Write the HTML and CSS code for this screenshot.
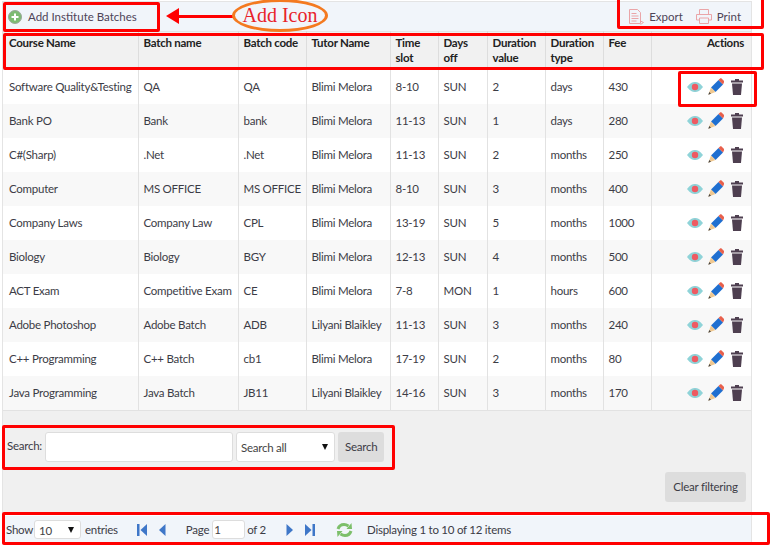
FILE: index.html
```html
<!DOCTYPE html>
<html lang="en">
<head>
    <meta charset="UTF-8">
    <title>Institute Batches</title>
    <link rel="stylesheet" href="styles.css">
</head>
<body>
    <svg width="0" height="0" class="defs">
        <symbol id="eye" viewBox="0 0 16 10">
            <path d="M0 5C3 1 5.500 0 8 0s5 1 8 5c-3 4-5.500 5-8 5S3 9 0 5z" fill="#8fd3d8"/>
            <circle cx="8" cy="5" r="3.200" fill="#ee5a62"/>
        </symbol>
        <symbol id="pencil" viewBox="0 0 16 17">
            <path d="M3 9.500 10.500 2l4.500 4.500L7.500 14z" fill="#1f6fd0"/>
            <path d="M10.500 2l1.300-1.300c.6-.6 1.400-.6 2 0l2 2c.6.600.6 1.400 0 2L15 6.500z" fill="#e8604c"/>
            <path d="M3 9.500.3 16.700 7.500 14z" fill="#f0c890"/>
            <path d="M1.300 14 .3 16.700 3 15.700z" fill="#444"/>
        </symbol>
        <symbol id="trash" viewBox="0 0 12 16">
            <path d="M4 0h4v1.500h4v2H0v-2h4z" fill="#4e3f50"/>
            <path d="M1 4.500h10L10 16H2z" fill="#4e3f50"/>
        </symbol>
        <symbol id="first" viewBox="0 0 11 12">
            <rect x="0" y="0" width="2.500" height="12" fill="#3f77c8"/>
            <path d="M10 0v12L3.500 6z" fill="#3f77c8"/>
        </symbol>
        <symbol id="prev" viewBox="0 0 7 12">
            <path d="M6.500 0v12L0 6z" fill="#3f77c8"/>
        </symbol>
    </svg>

    <div class="panel">
        <div class="toolbar">
            <a class="tool add">
                <svg width="14" height="14" viewBox="0 0 14 14">
                    <circle cx="7" cy="7" r="6.500" fill="#7dbb72" stroke="#9aa89a"/>
                    <path d="M3.500 7h7M7 3.500v7" stroke="#fff" stroke-width="2"/>
                </svg>
                Add Institute Batches
            </a>
            <div class="tools-right">
                <a class="tool">
                    <svg width="16" height="16" viewBox="0 0 16 16" fill="none" stroke="#eaa5a8">
                        <path d="M1.500.5h8l3 3v11h-11zM3.500 4.500h5M3.500 7h7M3.500 9.500h7M3.500 12h5M12.500 12l3 1.500-3 2"/>
                    </svg>
                    Export
                </a>
                <a class="tool">
                    <svg width="16" height="15" viewBox="0 0 16 15" fill="none" stroke="#eaa5a8">
                        <path d="M3.500 5V.5h9V5M3.500 11H.5V5.500h15V11h-3M3.500 9h9v5.500h-9z"/>
                    </svg>
                    Print
                </a>
            </div>
        </div>

        <table class="grid">
            <colgroup>
                <col class="c-course"><col class="c-name"><col class="c-code"><col class="c-tutor"><col class="c-time">
                <col class="c-off"><col class="c-val"><col class="c-type"><col class="c-fee"><col>
            </colgroup>
            <thead>
                <tr>
                    <th>Course Name</th><th>Batch name</th><th>Batch code</th><th>Tutor Name</th><th>Time slot</th>
                    <th>Days off</th><th>Duration value</th><th>Duration type</th><th>Fee</th><th class="right">Actions</th>
                </tr>
            </thead>
            <tbody id="rows"></tbody>
        </table>

        <div class="filters">
            <form class="search">
                <label>Search:</label>
                <input type="text" class="search-box">
                <span class="fake-select wide">Search all<i></i></span>
                <button type="button" class="btn">Search</button>
            </form>
            <div class="clear-row"><button type="button" class="btn">Clear filtering</button></div>
        </div>

        <div class="pager">
            <span>Show</span>
            <span class="fake-select small">10<i></i></span>
            <span>entries</span>
            <svg class="p-first" width="11" height="12"><use href="#first"/></svg>
            <svg class="p-prev" width="7" height="12"><use href="#prev"/></svg>
            <span class="p-page">Page</span>
            <input type="text" class="page-box" value="1">
            <span>of 2</span>
            <svg class="p-next flip" width="7" height="12"><use href="#prev"/></svg>
            <svg class="p-last flip" width="11" height="12"><use href="#first"/></svg>
            <svg class="p-refresh" width="17" height="16" viewBox="0 0 17 16" fill="none" stroke="#7cbf6a" stroke-width="3">
                <path d="M2 7c1-3 3-4.500 6-4.500 2 0 3 .5 4.500 1.500"/>
                <path d="M15 9c-1 3-3 4.500-6 4.500-2 0-3-.5-4.500-1.500"/>
                <path d="M10.500 7 16 7 15.500 1z" fill="#7cbf6a" stroke="none"/>
                <path d="M6.500 9 1 9l.5 6z" fill="#7cbf6a" stroke="none"/>
            </svg>
            <span class="p-info">Displaying 1 to 10 of 12 items</span>
        </div>
    </div>

    <!-- red markup drawn over the screenshot -->
    <div class="mark m-add"></div>
    <div class="mark m-head"></div>
    <div class="mark m-export"></div>
    <div class="mark m-actions"></div>
    <div class="mark m-search"></div>
    <div class="mark m-pager"></div>
    <div class="arrow"></div>
    <div class="callout">Add Icon</div>

    <script>
        var data = [
            ["Software Quality&Testing", "QA", "QA", "Blimi Melora", "8-10", "SUN", "2", "days", "430"],
            ["Bank PO", "Bank", "bank", "Blimi Melora", "11-13", "SUN", "1", "days", "280"],
            ["C#(Sharp)", ".Net", ".Net", "Blimi Melora", "11-13", "SUN", "2", "months", "250"],
            ["Computer", "MS OFFICE", "MS OFFICE", "Blimi Melora", "8-10", "SUN", "3", "months", "400"],
            ["Company Laws", "Company Law", "CPL", "Blimi Melora", "13-19", "SUN", "5", "months", "1000"],
            ["Biology", "Biology", "BGY", "Blimi Melora", "12-13", "SUN", "4", "months", "500"],
            ["ACT Exam", "Competitive Exam", "CE", "Blimi Melora", "7-8", "MON", "1", "hours", "600"],
            ["Adobe Photoshop", "Adobe Batch", "ADB", "Lilyani Blaikley", "11-13", "SUN", "3", "months", "240"],
            ["C++ Programming", "C++ Batch", "cb1", "Blimi Melora", "17-19", "SUN", "2", "months", "80"],
            ["Java Programming", "Java Batch", "JB11", "Lilyani Blaikley", "14-16", "SUN", "3", "months", "170"]
        ];
        var actions = '<td class="acts">' +
            '<svg class="a-eye" width="16" height="10"><use href="#eye"/></svg>' +
            '<svg class="a-pencil" width="16" height="17"><use href="#pencil"/></svg>' +
            '<svg class="a-trash" width="12" height="16"><use href="#trash"/></svg></td>';
        var html = "";
        data.forEach(function (row) {
            html += "<tr>";
            row.forEach(function (cell) {
                html += "<td>" + cell.replace("&", "&amp;") + "</td>";
            });
            html += actions + "</tr>";
        });
        document.getElementById("rows").innerHTML = html;
    </script>
</body>
</html>
```

FILE: styles.css
```css
body {
    margin: 0;
    background-color: #fff;
    color: #3c3c46;
    font-family: Lato, "Liberation Sans", sans-serif;
    font-size: 11.5px;
    letter-spacing: -0.25px;
    width: 784px;
    height: 548px;
    overflow: hidden;
    position: relative;
}
.defs {
    position: absolute;
}
.panel {
    width: 750px;
    margin: 1px 0 0 2px;
    border-top: 1px solid #e4e4e4;
    border-left: 1px solid #e4e4e4;
    border-right: 1px solid #e4e4e4;
    box-sizing: border-box;
}
.toolbar {
    height: 29px;
    background-color: #f1f5fa;
    display: flex;
    justify-content: space-between;
    align-items: center;
    padding: 0 10px 0 5px;
}
.tool {
    display: inline-flex;
    align-items: center;
    gap: 5px;
    color: #4e4458;
    letter-spacing: 0;
}
.tool.add {
    gap: 6px;
}
.tools-right {
    display: flex;
    gap: 13px;
}
.grid {
    width: 100%;
    border-collapse: collapse;
    table-layout: fixed;
}
.c-course { width: 135px; }
.c-name { width: 100px; }
.c-code { width: 68px; }
.c-tutor { width: 84px; }
.c-time { width: 48px; }
.c-off { width: 49px; }
.c-val { width: 58px; }
.c-type { width: 58px; }
.c-fee { width: 48px; }
.grid th {
    height: 38px;
    box-sizing: border-box;
    background-color: #f1f1f1;
    color: #222;
    font-weight: 700;
    text-align: left;
    vertical-align: top;
    padding: 3px 5px 0 5px;
    line-height: 15px;
    border-right: 1px solid #ddd;
    border-top: 1px solid #e4e4e4;
}
.grid th:first-child, .grid td:first-child {
    padding-left: 6px;
}
.grid th:last-child {
    border-right: none;
}
.grid th.right {
    text-align: right;
    padding-right: 7px;
}
.grid td {
    height: 34px;
    box-sizing: border-box;
    padding: 0 0 0 5px;
    border-right: 1px solid #e2e2e2;
    white-space: nowrap;
    overflow: hidden;
}
.grid td:last-child {
    border-right: none;
}
.grid tbody tr:nth-child(even) {
    background-color: #f8f8f8;
}
.grid td.acts {
    text-align: right;
    padding-right: 8px;
}
.acts svg {
    vertical-align: middle;
}
.a-pencil {
    margin: 0 7px 0 5px;
}
.filters {
    height: 102px;
    box-sizing: border-box;
    background-color: #f0f0f0;
    border-top: 1px solid #e2e2e2;
    padding: 21px 5px 0 4px;
}
.search {
    display: flex;
    align-items: center;
    margin: 0;
}
.search label {
    margin: -2px 3px 0 0;
}
.search-box {
    width: 188px;
    height: 30px;
    box-sizing: border-box;
    border: 1px solid #ddd;
    border-radius: 3px;
    background-color: #fff;
    margin: 0 3px 0 0;
}
.fake-select {
    position: relative;
    display: inline-block;
    box-sizing: border-box;
    background-color: #fff;
    border: 1px solid #ddd;
    border-radius: 3px;
    color: #444;
}
.fake-select i {
    position: absolute;
    top: 50%;
    right: 6px;
    margin-top: -3px;
    border-left: 3px solid transparent;
    border-right: 3px solid transparent;
    border-top: 6px solid #111;
}
.fake-select.wide {
    width: 99px;
    height: 30px;
    line-height: 30px;
    padding-left: 4px;
}
.fake-select.small {
    width: 47px;
    height: 19px;
    line-height: 19px;
    padding-left: 4px;
    margin: 0 4px 0 1px;
}
.btn {
    background-color: #ddd;
    border: none;
    border-radius: 3px;
    color: #3c3c46;
    font-family: inherit;
    font-size: inherit;
    letter-spacing: inherit;
    height: 30px;
    padding: 0 7px;
    margin-left: 3px;
}
.clear-row {
    display: flex;
    justify-content: flex-end;
    margin-top: 10px;
}
.clear-row .btn {
    width: 81px;
    padding: 0;
}
.pager {
    display: flex;
    align-items: center;
    background-color: #f1f5fa;
    height: 28px;
    margin-top: 4px;
    padding-left: 3px;
}
.pager svg {
    flex: none;
}
.flip {
    transform: scaleX(-1);
}
.p-first { margin-left: 19px; }
.p-prev { margin-left: 11px; }
.p-page { margin-left: 20px; margin-right: 3px; }
.page-box {
    width: 33px;
    height: 19px;
    box-sizing: border-box;
    border: 1px solid #ddd;
    border-radius: 3px;
    font-family: inherit;
    font-size: inherit;
    color: #444;
    padding: 0 1px;
    margin: 0 2px 0 0;
}
.p-next { margin-left: 20px; }
.p-last { margin-left: 11px; }
.p-refresh { margin-left: 21px; }
.p-info { margin-left: 14px; }

.mark {
    position: absolute;
    box-sizing: border-box;
    border: 3px solid #f00;
    border-radius: 2px;
}
.m-add { left: 3px; top: 2px; width: 157px; height: 30px; }
.m-head { left: 3px; top: 33px; width: 761px; height: 37px; }
.m-export { left: 617px; top: -3px; width: 147px; height: 32px; }
.m-actions { left: 678px; top: 71px; width: 79px; height: 36px; }
.m-search { left: 2px; top: 425px; width: 393px; height: 45px; }
.m-pager { left: 2px; top: 512px; width: 768px; height: 33px; }
.arrow {
    position: absolute;
    left: 178px;
    top: 15px;
    width: 55px;
    height: 3px;
    background-color: #f00;
}
.arrow::before {
    content: "";
    position: absolute;
    left: -12px;
    top: -7px;
    border-top: 8px solid transparent;
    border-bottom: 8px solid transparent;
    border-right: 13px solid #f00;
}
.callout {
    position: absolute;
    left: 232px;
    top: -1px;
    width: 96px;
    height: 33px;
    box-sizing: border-box;
    border: 3px solid #f47a20;
    border-radius: 50%;
    color: #e8232a;
    font-family: "Liberation Serif", serif;
    font-size: 20px;
    letter-spacing: 0;
    line-height: 26px;
    text-align: center;
    background-color: #f1f5fa;
}
```
